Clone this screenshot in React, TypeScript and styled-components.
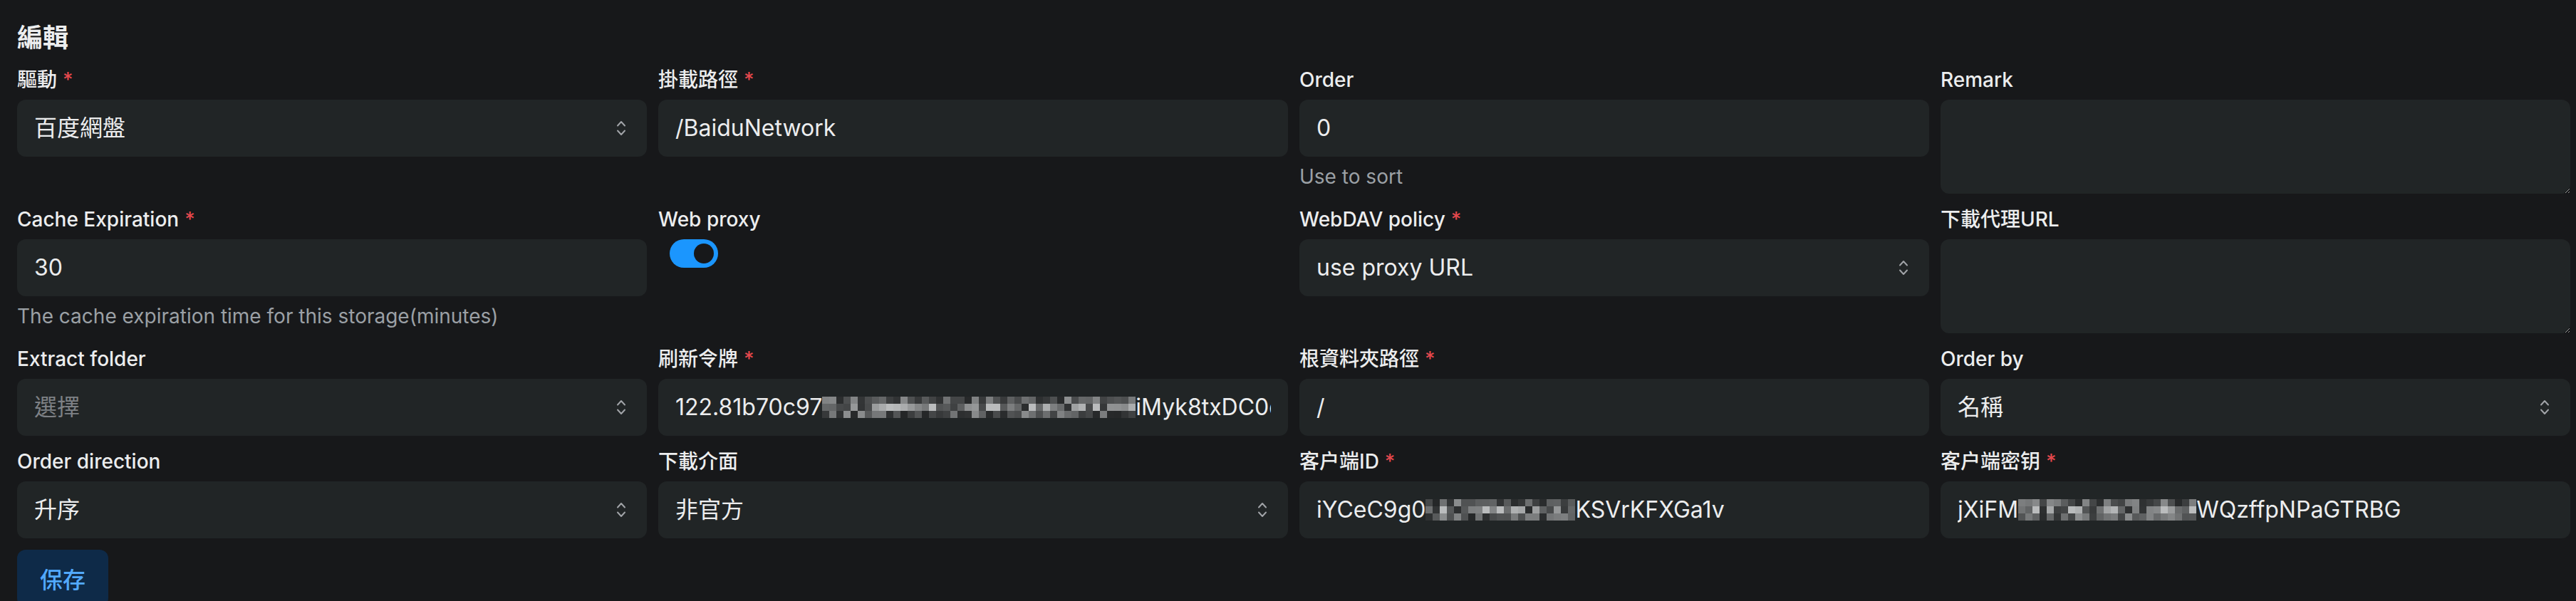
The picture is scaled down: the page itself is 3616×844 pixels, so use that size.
import React from 'react';
import styled, { createGlobalStyle } from 'styled-components';

const Global = createGlobalStyle`
  html, body { margin: 0; padding: 0; background: #17181a; overflow: hidden; }
  body { font-family: Inter, "Noto Sans CJK TC", sans-serif; color: #ecedee; }
  * { box-sizing: border-box; }
`;

const Page = styled.div`
  width: 3616px;
  height: 844px;
  padding: 26px 8px 0 24px;
`;

const Heading = styled.h2`
  margin: 0 0 12px;
  font-size: 36px;
  line-height: 54px;
  font-weight: 600;
  color: #ecedee;
`;

const Grid = styled.div`
  display: grid;
  grid-template-columns: repeat(4, minmax(0, 1fr));
  column-gap: 16px;
  row-gap: 16px;
  align-items: start;
`;

const Field = styled.div`
  display: flex;
  flex-direction: column;
  min-width: 0;
`;

const Label = styled.label`
  display: flex;
  align-items: center;
  font-size: 28px;
  line-height: 40px;
  font-weight: 500;
  color: #ecedee;
  margin-bottom: 8px;
`;

const Required = styled.span`
  color: #e5484d;
  margin-left: 8px;
  font-weight: 500;
`;

const Box = styled.div<{ $select?: boolean }>`
  display: flex;
  align-items: center;
  justify-content: space-between;
  height: 80px;
  background: #212526;
  border-radius: 12px;
  padding: 0 ${(p) => (p.$select ? '28px' : '24px')} 0 24px;
  font-size: 32px;
  line-height: 48px;
  color: #ecedee;
  overflow: hidden;
`;

const Value = styled.span<{ $placeholder?: boolean }>`
  white-space: nowrap;
  overflow: hidden;
  color: ${(p) => (p.$placeholder ? '#7e8185' : '#ecedee')};
  display: flex;
  align-items: center;
  min-width: 0;
`;

const Area = styled.textarea`
  height: 132px;
  background: #212526;
  border: none;
  border-radius: 12px;
  padding: 16px 24px;
  color: #ecedee;
  font: inherit;
  font-size: 32px;
  resize: vertical;
  outline: none;
  color-scheme: dark;
`;

const Helper = styled.div`
  margin-top: 8px;
  font-size: 28px;
  line-height: 40px;
  color: #9ba0a5;
`;

const Track = styled.div<{ $on: boolean }>`
  margin-left: 16px;
  width: 68px;
  height: 40px;
  border-radius: 20px;
  background: ${(p) => (p.$on ? '#1b96fe' : '#3a3f42')};
  display: flex;
  align-items: center;
  justify-content: ${(p) => (p.$on ? 'flex-end' : 'flex-start')};
  padding: 0 6px;
`;

const Thumb = styled.div`
  width: 28px;
  height: 28px;
  border-radius: 50%;
  background: #17181a;
`;

const SaveButton = styled.button`
  margin-top: 16px;
  height: 80px;
  padding: 0 32px;
  border: none;
  border-radius: 12px;
  background: #0e2a48;
  color: #52a9ff;
  font: inherit;
  font-size: 32px;
  font-weight: 500;
`;

const MosaicWrap = styled.span`
  display: inline-flex;
  flex-direction: column;
  height: 30px;
  overflow: hidden;
  flex-shrink: 0;
`;

const MosaicRow = styled.span`
  display: flex;
  height: 10px;
`;

const Cell = styled.span`
  display: block;
  width: 10px;
  height: 10px;
  flex-shrink: 0;
`;

function Mosaic({ width, seed }: { width: number; seed: number }) {
  const cols = Math.round(width / 10);
  let s = seed;
  const rnd = () => {
    s = (s * 9301 + 49297) % 233280;
    return s / 233280;
  };
  const rows = [0, 1, 2].map((r) =>
    Array.from({ length: cols }, () => {
      const v = rnd();
      const base = r === 1 ? 0.55 : 0.35;
      const t = Math.min(1, Math.max(0, v * base * 2));
      const c = Math.round(36 + t * 150);
      return `rgb(${c},${c + 2},${c + 3})`;
    })
  );
  return (
    <MosaicWrap>
      {rows.map((row, i) => (
        <MosaicRow key={i}>
          {row.map((c, j) => (
            <Cell key={j} style={{ background: c }} />
          ))}
        </MosaicRow>
      ))}
    </MosaicWrap>
  );
}

function SelectorIcon() {
  return (
    <svg width="16" height="24" viewBox="0 0 16 24" fill="none" stroke="#a0a3a7" strokeWidth="2" strokeLinecap="round" strokeLinejoin="round">
      <path d="M3 8.5 L8 3 L13 8.5" />
      <path d="M3 15.5 L8 21 L13 15.5" />
    </svg>
  );
}

function FLabel({ text, required }: { text: string; required?: boolean }) {
  return (
    <Label>
      {text}
      {required && <Required>*</Required>}
    </Label>
  );
}

function Select({ value, placeholder }: { value?: string; placeholder?: string }) {
  return (
    <Box $select>
      <Value $placeholder={!value}>{value ?? placeholder}</Value>
      <SelectorIcon />
    </Box>
  );
}

export default function App() {
  return (
    <>
      <Global />
      <Page>
        <Heading>編輯</Heading>
        <Grid>
          <Field>
            <FLabel text="驅動" required />
            <Select value="百度網盤" />
          </Field>
          <Field>
            <FLabel text="掛載路徑" required />
            <Box><Value>/BaiduNetwork</Value></Box>
          </Field>
          <Field>
            <FLabel text="Order" />
            <Box><Value>0</Value></Box>
            <Helper>Use to sort</Helper>
          </Field>
          <Field>
            <FLabel text="Remark" />
            <Area />
          </Field>

          <Field>
            <FLabel text="Cache Expiration" required />
            <Box><Value>30</Value></Box>
            <Helper>The cache expiration time for this storage(minutes)</Helper>
          </Field>
          <Field>
            <FLabel text="Web proxy" />
            <Track $on><Thumb /></Track>
          </Field>
          <Field>
            <FLabel text="WebDAV policy" required />
            <Select value="use proxy URL" />
          </Field>
          <Field>
            <FLabel text="下載代理URL" />
            <Area />
          </Field>

          <Field>
            <FLabel text="Extract folder" />
            <Select placeholder="選擇" />
          </Field>
          <Field>
            <FLabel text="刷新令牌" required />
            <Box>
              <Value>
                122.81b70c97
                <Mosaic width={440} seed={17} />
                iMyk8txDC0ddWq
              </Value>
            </Box>
          </Field>
          <Field>
            <FLabel text="根資料夾路徑" required />
            <Box><Value>/</Value></Box>
          </Field>
          <Field>
            <FLabel text="Order by" />
            <Select value="名稱" />
          </Field>

          <Field>
            <FLabel text="Order direction" />
            <Select value="升序" />
          </Field>
          <Field>
            <FLabel text="下載介面" />
            <Select value="非官方" />
          </Field>
          <Field>
            <FLabel text="客户端ID" required />
            <Box>
              <Value>
                iYCeC9g0
                <Mosaic width={210} seed={53} />
                KSVrKFXGa1v
              </Value>
            </Box>
          </Field>
          <Field>
            <FLabel text="客户端密钥" required />
            <Box>
              <Value>
                jXiFM
                <Mosaic width={250} seed={91} />
                WQzffpNPaGTRBG
              </Value>
            </Box>
          </Field>
        </Grid>
        <SaveButton>保存</SaveButton>
      </Page>
    </>
  );
}
